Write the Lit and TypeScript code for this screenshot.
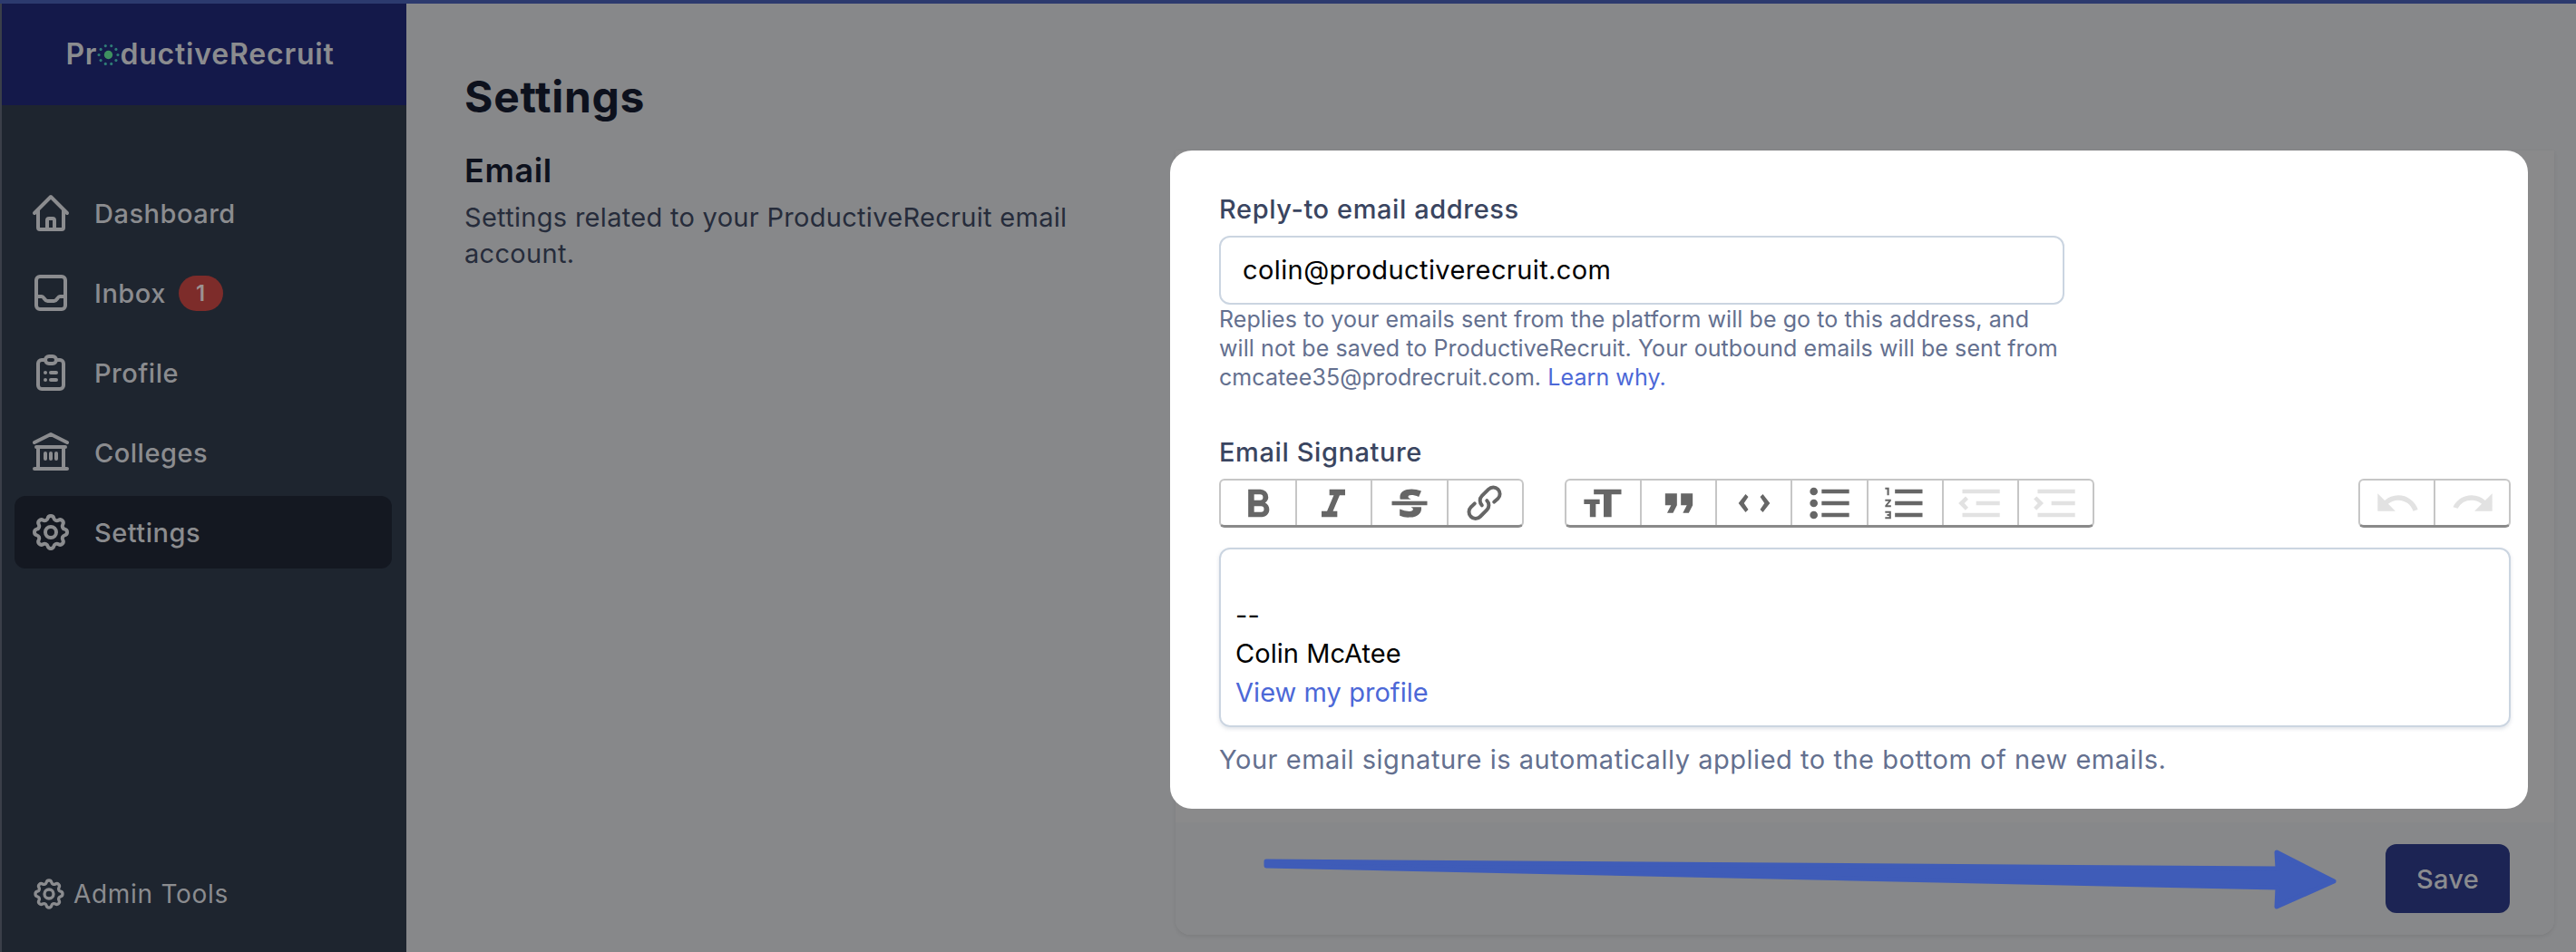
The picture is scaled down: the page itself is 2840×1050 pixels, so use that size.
import { LitElement, html, css, svg } from "lit";
import { customElement } from "lit/decorators.js";

// nav icons, stroke paths on a 24 box
const COG = svg`<path d="M10.325 4.317c.426-1.756 2.924-1.756 3.35 0a1.724 1.724 0 002.573 1.066c1.543-.94 3.31.826 2.37 2.37a1.724 1.724 0 001.065 2.572c1.756.426 1.756 2.924 0 3.35a1.724 1.724 0 00-1.066 2.573c.94 1.543-.826 3.31-2.37 2.37a1.724 1.724 0 00-2.572 1.065c-.426 1.756-2.924 1.756-3.35 0a1.724 1.724 0 00-2.573-1.066c-1.543.94-3.31-.826-2.37-2.37a1.724 1.724 0 00-1.065-2.572c-1.756-.426-1.756-2.924 0-3.35a1.724 1.724 0 001.066-2.573c-.94-1.543.826-3.31 2.37-2.37.996.608 2.296.07 2.572-1.065z"/><path d="M15 12a3 3 0 11-6 0 3 3 0 016 0z"/>`;

const NAV = [
  { label: "Dashboard", icon: svg`<path d="M3 12l2-2m0 0l7-7 7 7M5 10v10a1 1 0 001 1h3m10-11l2 2m-2-2v10a1 1 0 01-1 1h-3m-6 0a1 1 0 001-1v-4a1 1 0 011-1h2a1 1 0 011 1v4a1 1 0 001 1m-6 0h6"/>` },
  { label: "Inbox", badge: "1", icon: svg`<rect x="4" y="3" width="16" height="18" rx="2"/><path d="M4 14h3c1.2 0 1.6 2.5 3.2 2.5h3.6c1.6 0 2-2.5 3.2-2.5h3"/>` },
  { label: "Profile", icon: svg`<path d="M9 5H7a2 2 0 00-2 2v12a2 2 0 002 2h10a2 2 0 002-2V7a2 2 0 00-2-2h-2M9 5a2 2 0 002 2h2a2 2 0 002-2M9 5a2 2 0 012-2h2a2 2 0 012 2m-3 7h3m-3 4h3m-6-4h.01M9 16h.01"/>` },
  { label: "Colleges", icon: svg`<path d="M3 6.5L12 2l9 4.500M4 9h16M5 9v11M19 9v11M9 12.500v3M12 12.500v3M15 12.500v3M3 21h18"/>` },
  { label: "Settings", active: true, icon: COG },
];

// trix toolbar glyphs, filled on a 24 box
const TOOLS = {
  bold: svg`<path d="M15.6 11.8c1-.7 1.6-1.8 1.600-2.800a4 4 0 0 0-4-4H7v14h7c2.100 0 3.700-1.700 3.700-3.800 0-1.500-.8-2.800-2.100-3.400zM10 7.500h3a1.500 1.500 0 1 1 0 3h-3v-3zm3.500 9H10v-3h3.500a1.500 1.500 0 1 1 0 3z"/>`,
  italic: svg`<path d="M10 5v3h2.200l-3.400 8H6v3h8v-3h-2.200l3.400-8H18V5h-8z"/>`,
  strike: svg`<path d="M12.730 14l.28.14c.26.15.45.3.57.44.12.14.18.3.18.5 0 .3-.15.56-.44.75-.3.2-.76.3-1.390.3A13.520 13.520 0 0 1 7 14.950v3.370a10.640 10.640 0 0 0 4.840.88c1.260 0 2.350-.19 3.280-.56.93-.37 1.640-.9 2.140-1.570s.74-1.450.74-2.320c0-.26-.02-.51-.06-.75h-5.210zm-5.500-4c-.08-.34-.12-.7-.12-1.100 0-1.290.52-2.300 1.580-3.020 1.050-.72 2.500-1.080 4.340-1.080 1.620 0 3.280.34 4.970 1l-1.300 2.930c-1.470-.6-2.730-.9-3.800-.9-.55 0-.96.08-1.200.26-.26.17-.38.38-.38.64 0 .27.16.52.48.74.17.12.53.3 1.050.53H7.230zM3 13h18v-2H3v2z"/>`,
  link: svg`<path d="M9.880 13.700a4.300 4.300 0 0 1 0-6.070l3.370-3.370a4.260 4.260 0 0 1 6.070 0 4.300 4.300 0 0 1 0 6.060l-1.960 1.720a.91.91 0 1 1-1.300-1.300l1.970-1.710a2.460 2.460 0 0 0-3.480-3.480l-3.380 3.370a2.460 2.460 0 0 0 0 3.480.91.91 0 1 1-1.300 1.300z"/><path d="M4.250 19.460a4.300 4.300 0 0 1 0-6.070l1.930-1.900a.91.91 0 1 1 1.300 1.300l-1.930 1.900a2.460 2.460 0 0 0 3.480 3.480l3.370-3.380c.96-.96.96-2.520 0-3.480a.91.91 0 1 1 1.300-1.300 4.300 4.300 0 0 1 0 6.070l-3.380 3.380a4.260 4.260 0 0 1-6.070 0z"/>`,
  heading: svg`<path d="M12 19V7.500H7V5h14v2.500h-5V19h-4zM5 19v-6.500H2V10h8v2.500H8V19H5z"/>`,
  quote: svg`<path d="M6 17h3l2-4V7H5v6h3zm8 0h3l2-4V7h-6v6h3z"/>`,
  code: svg`<path d="M17.200 12L15 15.200l1.400 1.400L20 12l-3.600-4.600L15 8.800l2.200 3.200zM6.800 12L9 15.200l-1.400 1.400L4 12l3.600-4.600L9 8.800 6.800 12z"/>`,
  bullets: svg`<path d="M4 4a2 2 0 1 0 0 4 2 2 0 0 0 0-4zm0 6a2 2 0 1 0 0 4 2 2 0 0 0 0-4zm0 6a2 2 0 1 0 0 4 2 2 0 0 0 0-4zm4 3h14v-2H8v2zm0-6h14v-2H8v2zm0-8v2h14V5H8z"/>`,
  numbers: svg`<path d="M2 17h2v.5H3v1h1v.5H2v1h3v-4H2v1zm1-9h1V4H2v1h1v3zm-1 3h1.800L2 13.100v.9h3v-1H3.200L5 10.900V10H2v1zm5-6v2h14V5H7zm0 14h14v-2H7v2zm0-6h14v-2H7v2z"/>`,
  outdent: svg`<path d="M3 19h19v-2H3v2zm7-6h12v-2H10v2zm-8.300-.3l2.800 2.900L6 14.200 4 12l2-2-1.400-1.500L1 12l.7.7zM3 5v2h19V5H3z"/>`,
  indent: svg`<path d="M3 19h19v-2H3v2zm7-6h12v-2H10v2zm-6.900-1L1 14.200l1.400 1.400L6 12l-.7-.7-2.800-2.800L1 9.900 3.100 12zM3 5v2h19V5H3z"/>`,
  undo: svg`<path d="M12.500 8c-2.650 0-5.050 1-6.900 2.600L2 7v9h9l-3.620-3.620A7.950 7.950 0 0 1 12.500 10.500c3.540 0 6.550 2.310 7.600 5.500l2.370-.78A10.520 10.520 0 0 0 12.500 8z"/>`,
  redo: svg`<path d="M18.400 10.600C16.550 9 14.150 8 11.500 8c-4.160 0-7.740 2.420-9.440 5.930l2.360.78A8 8 0 0 1 11.500 10.500c1.960 0 3.730.72 5.120 1.880L13 16h9V7l-3.600 3.600z"/>`,
};

type Tool = keyof typeof TOOLS;

@customElement("app-root")
export class AppRoot extends LitElement {
  static styles = css`
    :host {
      display: block;
      width: 2840px;
      height: 1050px;
      overflow: hidden;
      background: #87888a;
      font-family: Inter, "Open Sans", sans-serif;
    }

    * {
      box-sizing: border-box;
    }

    .shell {
      position: relative;
      display: flex;
      height: 1050px;
      border-top: 4px solid #2c3a6e;
    }

    /* sidebar */
    .sidebar {
      display: flex;
      flex-direction: column;
      flex: none;
      width: 448px;
      border-left: 2px solid #3a3f49;
      background: #1e252f;
      color: #8b8c8f;
    }

    .brand {
      display: flex;
      align-items: center;
      justify-content: center;
      flex: none;
      height: 112px;
      padding: 0 9px 2px 0;
      background: #14194a;
      font-size: 32px;
      font-weight: 600;
      letter-spacing: 0.8px;
    }

    .brand svg {
      width: 25px;
      height: 25px;
      margin: 3px 0 0;
    }

    .nav {
      display: flex;
      flex-direction: column;
      gap: 8px;
      padding: 79px 16px 0 14px;
    }

    .nav-item {
      display: flex;
      align-items: center;
      height: 80px;
      padding-left: 16px;
      border-radius: 12px;
      font-size: 29px;
      font-weight: 500;
      letter-spacing: 0.5px;
    }

    .nav-item.active {
      background: #141821;
    }

    .nav-item svg {
      flex: none;
      width: 48px;
      height: 48px;
      margin-right: 24px;
      fill: none;
      stroke: currentColor;
      stroke-width: 2;
      stroke-linecap: round;
      stroke-linejoin: round;
    }

    .badge {
      display: flex;
      align-items: center;
      justify-content: center;
      width: 49px;
      height: 39px;
      margin-left: 14px;
      border-radius: 20px;
      background: #7d2c2a;
      color: #9c9291;
      font-size: 24px;
      font-weight: 600;
    }

    .admin {
      display: flex;
      align-items: center;
      gap: 7px;
      margin-top: auto;
      padding: 0 0 44px 32px;
      font-size: 28px;
      letter-spacing: 0.7px;
    }

    .admin svg {
      width: 40px;
      height: 40px;
      fill: none;
      stroke: currentColor;
      stroke-width: 2;
      stroke-linecap: round;
      stroke-linejoin: round;
    }

    /* main */
    .main {
      flex: 1;
      padding: 73px 0 0 64px;
      color: #0d111d;
    }

    h1 {
      margin: 0 0 29px;
      font-size: 48px;
      line-height: 60px;
      font-weight: 700;
      letter-spacing: 0.7px;
    }

    .section {
      display: grid;
      grid-template-columns: 784px 1520px;
    }

    h2 {
      margin: 0 0 10px;
      font-size: 36px;
      line-height: 44px;
      font-weight: 600;
      letter-spacing: 0.6px;
    }

    .intro p {
      width: 700px;
      margin: 0;
      color: #262c3b;
      font-size: 29px;
      line-height: 40px;
      letter-spacing: 0.3px;
    }

    .card {
      border-radius: 0 0 16px 16px;
      background: #8a8a8b;
      box-shadow: 0 2px 4px rgba(0, 0, 0, 0.08);
    }

    .spotlight {
      height: 726px;
      margin: 0 29px 15px -6px;
      padding: 45px 19px 0 54px;
      border-radius: 24px;
      background: #fff;
    }

    label {
      display: block;
      color: #3a4560;
      font-size: 29px;
      line-height: 40px;
      font-weight: 500;
      letter-spacing: 0.6px;
    }

    .input {
      width: 932px;
      height: 76px;
      margin: 9px 0 0;
      padding: 0 24px;
      border: 2px solid #cbd5e1;
      border-radius: 12px;
      color: #000;
      font-size: 29px;
      line-height: 72px;
      letter-spacing: 0.4px;
    }

    .help {
      margin: 0 0 47px;
      color: #64708f;
      font-size: 25px;
      line-height: 32px;
      letter-spacing: 0.08px;
    }

    a {
      color: #4c68d7;
      text-decoration: none;
    }

    /* trix style toolbar */
    .toolbar {
      display: flex;
      gap: 45px;
      margin: 9px 0 22px;
    }

    .group {
      display: flex;
      height: 54px;
      border: 2px solid #c6c6c6;
      border-bottom: 3px solid #8a8a8a;
      border-radius: 6px;
    }

    .g4 { width: 336px; }
    .g7 { width: 584px; }
    .g2 { width: 168px; margin-left: auto; }

    .tool {
      display: flex;
      align-items: center;
      justify-content: center;
      flex: 1;
      overflow: hidden;
      border-left: 2px solid #c6c6c6;
    }

    .tool:first-child {
      border-left: 0;
    }

    .tool svg {
      flex: none;
      width: 52px;
      height: 52px;
      fill: #666;
    }

    .tool.off svg {
      fill: #e2e2e2;
    }

    .editor {
      height: 198px;
      padding: 9px 16px;
      border: 2px solid #cbd5e1;
      border-radius: 12px;
      box-shadow: 0 2px 4px rgba(100, 116, 139, 0.2);
      color: #000;
      font-size: 29px;
      line-height: 42.5px;
      letter-spacing: 0.05px;
    }

    .note {
      margin: 16px 0 0;
      color: #64708f;
      font-size: 29px;
      line-height: 40px;
      letter-spacing: 0.53px;
    }

    .footer {
      display: flex;
      align-items: center;
      justify-content: flex-end;
      height: 124px;
      padding-right: 49px;
      border-radius: 0 0 16px 16px;
      background: #87888a;
    }

    .save {
      display: flex;
      align-items: center;
      justify-content: center;
      width: 137px;
      height: 76px;
      border-radius: 12px;
      background: #1c2454;
      color: #8b8c8f;
      font-size: 29px;
      font-weight: 500;
      letter-spacing: 0.3px;
    }

    /* annotation drawn over the page */
    .arrow {
      position: absolute;
      left: 1380px;
      top: 920px;
      width: 1210px;
      height: 90px;
      fill: #3f5cb8;
      stroke: #3f5cb8;
      stroke-width: 5;
      stroke-linejoin: round;
    }
  `;

  private renderTool(name: Tool, off = false) {
    return html`<div class="tool ${off ? "off" : ""}">
      <svg viewBox="0 0 24 24">${TOOLS[name]}</svg>
    </div>`;
  }

  private renderLogoDot() {
    // ring of dots standing in for the o of the wordmark
    const dots = Array.from({ length: 10 }, (_, i) => {
      const a = (i * Math.PI) / 5;
      return svg`<circle cx=${12 + 10 * Math.cos(a)} cy=${12 + 10 * Math.sin(a)} r="1.500" fill="#2f7d76" />`;
    });
    return html`<svg viewBox="0 0 24 24">${dots}<circle cx="12" cy="12" r="4.500" fill="#3f9060" /></svg>`;
  }

  render() {
    return html`
      <div class="shell">
        <aside class="sidebar">
          <div class="brand">Pr${this.renderLogoDot()}ductiveRecruit</div>
          <nav class="nav">
            ${NAV.map(
              (item) => html`
                <div class="nav-item ${item.active ? "active" : ""}">
                  <svg viewBox="0 0 24 24">${item.icon}</svg>
                  ${item.label}
                  ${item.badge ? html`<span class="badge">${item.badge}</span>` : ""}
                </div>
              `
            )}
          </nav>
          <div class="admin"><svg viewBox="0 0 24 24">${COG}</svg>Admin Tools</div>
        </aside>

        <main class="main">
          <h1>Settings</h1>
          <div class="section">
            <div class="intro">
              <h2>Email</h2>
              <p>Settings related to your ProductiveRecruit email account.</p>
            </div>
            <div class="card">
              <div class="spotlight">
                <label>Reply-to email address</label>
                <div class="input">colin@productiverecruit.com</div>
                <p class="help">
                  Replies to your emails sent from the platform will be go to this address, and<br />
                  will not be saved to ProductiveRecruit. Your outbound emails will be sent from<br />
                  cmcatee35@prodrecruit.com. <a>Learn why.</a>
                </p>
                <label>Email Signature</label>
                <div class="toolbar">
                  <div class="group g4">
                    ${this.renderTool("bold")}${this.renderTool("italic")}${this.renderTool("strike")}${this.renderTool("link")}
                  </div>
                  <div class="group g7">
                    ${this.renderTool("heading")}${this.renderTool("quote")}${this.renderTool("code")}${this.renderTool("bullets")}${this.renderTool("numbers")}${this.renderTool("outdent", true)}${this.renderTool("indent", true)}
                  </div>
                  <div class="group g2">
                    ${this.renderTool("undo", true)}${this.renderTool("redo", true)}
                  </div>
                </div>
                <div class="editor">
                  <br />
                  --<br />
                  Colin McAtee<br />
                  <a>View my profile</a>
                </div>
                <p class="note">Your email signature is automatically applied to the bottom of new emails.</p>
              </div>
              <div class="footer"><div class="save">Save</div></div>
            </div>
          </div>
        </main>

        <svg class="arrow" viewBox="0 0 1210 90">
          <polygon points="16,26 1131,34 1130,16 1193,48 1130,76 1131,55 16,31" />
        </svg>
      </div>
    `;
  }
}
